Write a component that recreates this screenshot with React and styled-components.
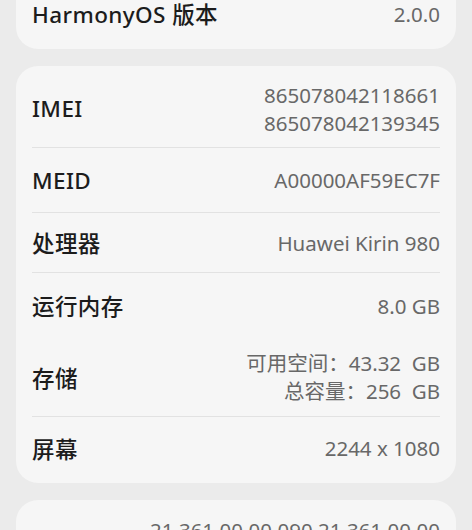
import React from "react";
import styled, { createGlobalStyle } from "styled-components";

const GlobalStyle = createGlobalStyle`
  html, body {
    margin: 0;
    padding: 0;
    background: #ebebeb;
    font-family: "Noto Sans", "Noto Sans CJK SC", sans-serif;
  }
`;

const Page = styled.div`
  width: 472px;
  height: 530px;
  overflow: hidden;
`;

// the list is scrolled a bit, so the first card is cut at the top
const Scroller = styled.div`
  margin-top: -22px;
  padding: 0 16px;
  display: flex;
  flex-direction: column;
  gap: 17px;
`;

const Card = styled.section`
  background: #f6f6f6;
  border-radius: 22px;
  padding: 4px 16px 4px;
`;

const Row = styled.div`
  display: flex;
  align-items: ${(p) => (p.$top ? "flex-start" : "center")};
  justify-content: space-between;
  min-height: ${(p) => p.$height || 63}px;
  padding-top: ${(p) => (p.$top ? 12 : 0)}px;
  border-top: ${(p) => (p.$divider ? "1px solid #e2e2e2" : "none")};
  box-sizing: border-box;
`;

const Label = styled.div`
  margin-top: ${(p) => p.$offset || 0}px;
  font-size: 22.5px;
  letter-spacing: 0.4px;
  font-weight: 500;
  color: #1c1c1c;
  white-space: nowrap;
`;

const Value = styled.div`
  font-size: 20.5px;
  line-height: 28px;
  color: #686868;
  text-align: right;
  white-space: pre;
`;

const rows = [
  { label: "IMEI", value: ["865078042118661", "865078042139345"], height: 77 },
  { label: "MEID", value: ["A00000AF59EC7F"], divider: true, height: 65 },
  { label: "处理器", value: ["Huawei Kirin 980"], divider: true, height: 60 },
  { label: "运行内存", value: ["8.0 GB"], divider: true, height: 66 },
  { label: "存储", value: ["可用空间：43.32  GB", "总容量：256  GB"], height: 78 },
  { label: "屏幕", value: ["2244 x 1080"], divider: true, height: 63 },
];

export default function App() {
  return (
    <Page>
      <GlobalStyle />
      <Scroller>
        <Card>
          <Row>
            <Label>HarmonyOS 版本</Label>
            <Value>2.0.0</Value>
          </Row>
        </Card>
        <Card>
          {rows.map((r, i) => (
            <Row key={i} $divider={r.divider} $height={r.height}>
              <Label>{r.label}</Label>
              <Value>
                {r.value.map((line, j) => (
                  <div key={j}>{line}</div>
                ))}
              </Value>
            </Row>
          ))}
        </Card>
        <Card>
          <Row $top $height={120}>
            <Label $offset={28}>版本号</Label>
            <Value>
              <div>21.361.00.00.090 21.361.00.00</div>
              <div>.090(C00E89R1P2)</div>
              <div>GPU Turbo</div>
            </Value>
          </Row>
        </Card>
      </Scroller>
    </Page>
  );
}
